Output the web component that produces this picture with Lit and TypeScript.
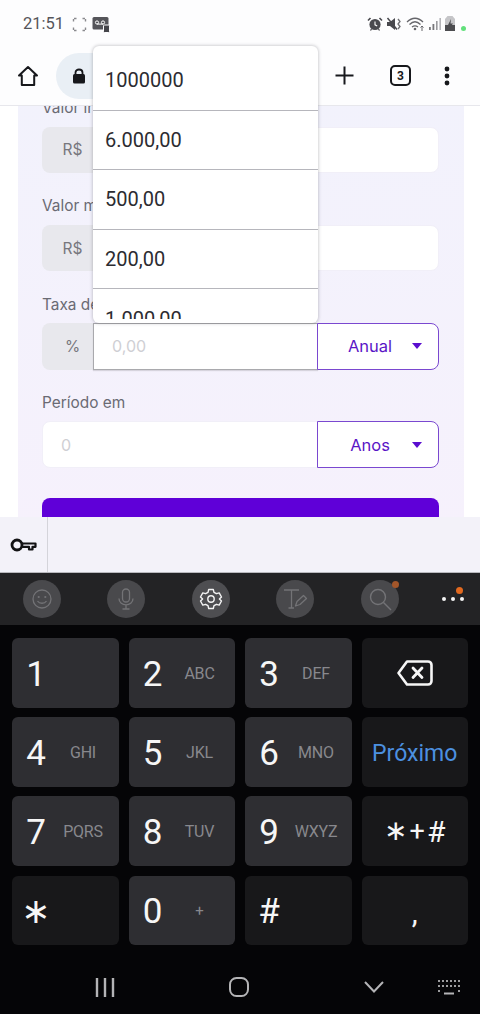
import { LitElement, html, css, svg } from "lit";
import { customElement } from "lit/decorators.js";

const digitKeys: [string, string][][] = [
  [["1", ""], ["2", "ABC"], ["3", "DEF"]],
  [["4", "GHI"], ["5", "JKL"], ["6", "MNO"]],
  [["7", "PQRS"], ["8", "TUV"], ["9", "WXYZ"]],
];

const suggestions = ["1000000", "6.000,00", "500,00", "200,00", "1.000,00"];

@customElement("app-root")
export class AppRoot extends LitElement {
  static styles = css`
    :host { display: block; position: relative; width: 480px; height: 1014px; overflow: hidden; background: #fff; font-family: Inter, "Liberation Sans", sans-serif; }
    * { box-sizing: border-box; }
    .screen { display: flex; flex-direction: column; height: 1014px; }

    .chrome { position: relative; z-index: 2; background: #fdfdfe; border-bottom: 1px solid #e7e7ec; height: 106px; flex: none; }
    .status { height: 46px; display: flex; align-items: center; padding: 2px 14px 0 23px; font-family: Roboto, sans-serif; color: #55555a; }
    .time { font-size: 16.5px; line-height: 20px; margin-right: 8px; }
    .status-left { display: flex; align-items: center; gap: 5px; }
    .status-right { margin-left: auto; display: flex; align-items: center; gap: 3px; }
    .online { width: 5px; height: 5px; border-radius: 50%; background: #62e07c; margin: 8px 0 0 2px; }
    .toolbar { height: 59px; display: flex; align-items: center; padding: 0 30px 0 17px; }
    .pill { margin-left: 17px; width: 262px; height: 46px; border-radius: 23px; background: #e9eff5; display: flex; align-items: center; padding-left: 16px; }
    .tb-right { margin-left: auto; display: flex; align-items: center; gap: 35px; }
    .tabs { width: 21px; height: 21px; border: 2px solid #17181c; border-radius: 5px; display: flex; align-items: center; justify-content: center; font: 700 12px Roboto, sans-serif; color: #17181c; margin-right: -2px; }

    .page { height: 411px; flex: none; overflow: hidden; background: #fff; padding: 0 16px 0 18px; }
    .card { margin-top: -10.3px; height: 440px; background: linear-gradient(180deg, #f2f2fc, #f6f1fc); padding: 0 25px 0 24px; display: flex; flex-direction: column; gap: 20.7px; }
    .field { display: flex; flex-direction: column; gap: 7px; }
    .label { font-size: 15.4px; line-height: 24px; color: #6a6a73; white-space: nowrap; position: relative; top: 0.5px; }
    .group { display: flex; height: 46.5px; }
    .prefix { width: 51px; flex: none; background: #e8e8ed; border-radius: 8px 0 0 8px; display: flex; align-items: center; justify-content: center; color: #77777d; font-size: 15.5px; padding-left: 10px; }
    .input { flex: 1; background: #fff; border-radius: 0 8px 8px 0; border: 1px solid #f1eff8; display: flex; align-items: center; padding-left: 18px; color: #cfcfd4; font-size: 16px; }
    .input.alone { border-radius: 8px 0 0 8px; }
    .input.focus { border-radius: 0; border: 1px solid #a9a9ad; border-right: none; box-shadow: 0 1px 1px rgba(0,0,0,.12); }
    .select { width: 122px; flex: none; background: #fff; border: 1px solid #7a48d0; border-radius: 0 8px 8px 0; display: flex; align-items: center; padding: 0 16px 0 10px; color: #5a15c6; font-size: 16.5px; }
    .select span { flex: 1; text-align: center; }
    .caret { width: 0; height: 0; border-left: 5.5px solid transparent; border-right: 5.5px solid transparent; border-top: 6px solid #5a0dcf; }
    .submit { height: 60px; margin-top: 9.7px; border: none; border-radius: 8px; background: #5f00d8; flex: none; }
    .input-narrow { margin-right: -1px; }

    .suggest { position: absolute; z-index: 3; left: 93px; top: 46px; width: 225px; height: 277px; padding: 5px 0 4px; background: #fff; border-radius: 6px; box-shadow: 0 0 3px 1px rgba(60,60,70,.22); }
    .suggest-in { height: 100%; overflow: hidden; }
    .opt { height: 59.6px; display: flex; align-items: center; padding-left: 12px; border-bottom: 1px solid #b6b6bc; font: 20px Roboto, sans-serif; color: #2c2c31; }
    .opt:last-child { border-bottom: none; }

    .accessory { height: 56px; flex: none; background: #f3f2f9; display: flex; position: relative; z-index: 1; border-bottom: 1px solid #b9b9be; }
    .acc-key { width: 48px; border-right: 1px solid #d4d4da; display: flex; align-items: center; justify-content: center; }

    .kb-tools { height: 52px; flex: none; background: #232325; display: flex; align-items: center; padding-left: 23px; position: relative; }
    .tool { width: 38px; height: 38px; border-radius: 50%; background: #49494c; margin-right: 46.4px; display: flex; align-items: center; justify-content: center; position: relative; }
    .tool:nth-child(3) { background: #4e4e51; }
    .badge { position: absolute; border-radius: 50%; background: #e2691f; }
    .badge.dim { width: 7px; height: 7px; right: 0; top: 1px; background: #a2562a; }
    .more { position: absolute; left: 442px; top: 24px; display: flex; gap: 5px; }
    .more i { width: 4px; height: 4px; border-radius: 50%; background: #f4f4f4; display: block; }
    .badge.main { width: 7px; height: 7px; left: 456px; top: 14px; }

    .keyboard { flex: 1; background: #050507; display: flex; flex-direction: column; }
    .keys { display: grid; grid-template-columns: repeat(4, 106.5px); grid-auto-rows: 69.6px; gap: 9.6px 10px; padding: 13px 12px 0; }
    .key { border-radius: 6px; background: #2e2e32; color: #f6f6f6; display: grid; grid-template-columns: 48px 46px; align-items: center; font-family: Roboto, sans-serif; }
    .key.dark { background: #18181a; }
    .key.center { display: flex; justify-content: center; }
    .d { font-size: 35px; line-height: 1; text-align: center; padding-top: 3px; }
    .s { font-size: 16px; color: #88888d; text-align: center; white-space: nowrap; letter-spacing: -.2px; padding-top: 1px; }
    .s.plus { font-size: 15px; }
    .next { font-size: 23px; color: #4c90e0; padding-top: 3px; }
    .sym { font-size: 35px; line-height: 1; text-align: center; padding-top: 3px; }
    .star { font-family: "DejaVu Sans", sans-serif; font-size: 35px; line-height: 1; text-align: center; padding-top: 3px; }
    .combo { display: flex; align-items: center; font-size: 27px; gap: 2px; }
    .combo b { font-family: "DejaVu Sans", sans-serif; font-weight: 400; font-size: 28px; line-height: 1; }
    .combo .hash { font-size: 30px; }
    .comma { font-size: 30px; line-height: 1; padding-top: 5px; }

    .nav { flex: 1; display: flex; align-items: center; position: relative; padding: 14px 0 0 94px; }
    .nav svg { display: block; }
    .sp1 { width: 112px; }
    .sp2 { width: 113px; }
    .sp3 { width: 52px; }
  `;

  private icon(w: number, h: number, body: unknown) {
    return html`<svg width=${w} height=${h} viewBox="0 0 ${w} ${h}" fill="none">${body}</svg>`;
  }

  private statusLeft() {
    return html`<div class="status-left">
      ${this.icon(15, 15, svg`<path d="M1.5 4.5V1.5H4.5M10.5 1.5H13.5V4.5M13.5 10.5V13.5H10.5M4.5 13.5H1.5V10.5" stroke="#8a8a8e" stroke-width="1.4" stroke-dasharray="2.5 1"/>`)}
      ${this.icon(18, 17, svg`<rect x="0.5" y="1" width="16" height="12.5" rx="1.5" fill="#55555a"/><circle cx="5" cy="6.5" r="1.6" stroke="#fff" stroke-width="1"/><circle cx="11" cy="6.5" r="1.6" stroke="#fff" stroke-width="1"/><path d="M5 8.1H11" stroke="#fff"/><rect x="11.5" y="9" width="6" height="7.5" rx="1" fill="#45454a" stroke="#fdfdfe"/>`)}
    </div>`;
  }

  private statusRight() {
    return html`<div class="status-right">
      ${this.icon(16, 16, svg`<circle cx="8" cy="8.5" r="5.6" fill="#49494e"/><path d="M8 5.5V8.8L10.2 10" stroke="#fff" stroke-width="1.1"/><path d="M1 4.5L3.5 2M15 4.5L12.5 2" stroke="#49494e" stroke-width="1.6"/><path d="M3.5 14.5L4.5 13M12.5 14.5L11.5 13" stroke="#49494e" stroke-width="1.3"/>`)}
      ${this.icon(17, 16, svg`<path d="M1 6H4L9 2V14L4 10H1Z" fill="#49494e"/><path d="M1.5 2L11 13.500" stroke="#49494e" stroke-width="1.500"/><path d="M12 3L14 5.500L12 8L14 10.500L12 13" stroke="#6e6e72" stroke-width="1.300"/>`)}
      ${this.icon(20, 16, svg`<path d="M1 6C6 1 12 1 17 6M3.5 8.5C7 5 11 5 14.5 8.5M6 11C8 9.4 10 9.4 12 11" stroke="#66666b" stroke-width="1.3"/><circle cx="9" cy="13" r="1.3" fill="#66666b"/><path d="M16 15V10M14.5 11.5L16 10L17.5 11.5" stroke="#66666b" stroke-width="1"/>`)}
      ${this.icon(12, 16, svg`<rect x="0" y="11" width="1.800" height="3" fill="#77777b"/><rect x="3.500" y="8" width="1.800" height="6" fill="#77777b"/><rect x="7" y="5" width="1.600" height="9" fill="#9a9a9e"/><rect x="10.400" y="2" width="1.600" height="12" fill="#b5b5b9"/>`)}
      ${this.icon(12, 18, svg`<path d="M3.5 1H8.5L11 4V16H1V4Z" fill="#c5c5c8"/><rect x="1" y="10" width="10" height="6" fill="#4c4c50"/><path d="M7 4L4 10H6.5L5 14L9 8.5H6.5Z" fill="#4c4c50"/>`)}
      <span class="online"></span>
    </div>`;
  }

  private field(label: string, prefix: string, hint: string, unit?: string, focus = false) {
    return html`<div class="field">
      <div class="label">${label}</div>
      <div class="group">
        ${prefix ? html`<div class="prefix">${prefix}</div>` : ""}
        <div class="input ${unit ? "input-narrow" : ""} ${focus ? "focus" : ""} ${prefix ? "" : "alone"}">${hint}</div>
        ${unit ? html`<div class="select"><span>${unit}</span><i class="caret"></i></div>` : ""}
      </div>
    </div>`;
  }

  private tools() {
    const c = "#737376";
    return html`
      <div class="tool">${this.icon(24, 24, svg`<circle cx="12" cy="12" r="9" stroke=${c} stroke-width="1.3"/><circle cx="8.7" cy="10" r="1.1" fill=${c}/><circle cx="15.3" cy="10" r="1.1" fill=${c}/><path d="M7.5 14C9.5 17 14.5 17 16.5 14" stroke=${c} stroke-width="1.3"/>`)}</div>
      <div class="tool">${this.icon(24, 24, svg`<rect x="8.5" y="2" width="7" height="13" rx="3.5" stroke=${c} stroke-width="1.3"/><path d="M5 11.5C5 20 19 20 19 11.5M12 18V21.5M8.5 22H15.5" stroke=${c} stroke-width="1.3"/>`)}</div>
      <div class="tool">${this.icon(24, 24, svg`<path d="M9.7 2.5H14.3L15 5.3L17.4 6.7L20.2 5.9L22.5 10L20.4 12L22.5 14L20.2 18.100L17.4 17.300L15 18.700L14.300 21.500H9.700L9 18.700L6.600 17.300L3.800 18.100L1.500 14L3.600 12L1.500 10L3.800 5.900L6.600 6.700L9 5.300Z" stroke="#f4f4f4" stroke-width="1.4" stroke-linejoin="round"/><circle cx="12" cy="12" r="3.200" stroke="#f4f4f4" stroke-width="1.400"/>`)}</div>
      <div class="tool">${this.icon(26, 26, svg`<path d="M2 4H17M9.500 4V22M6.500 22H12" stroke=${c} stroke-width="1.300"/><path d="M13.500 20L15 15.500L21.500 9.500L24.500 12.500L18 18.500Z" stroke=${c} stroke-width="1.300" stroke-linejoin="round"/>`)}</div>
      <div class="tool">${this.icon(26, 26, svg`<circle cx="11" cy="11" r="7.500" stroke=${c} stroke-width="1.400"/><path d="M16.500 16.500L24 24" stroke=${c} stroke-width="1.400"/>`)}<span class="badge dim"></span></div>
      <div class="more"><i></i><i></i><i></i></div>
      <span class="badge main"></span>
    `;
  }

  private keys() {
    const side: unknown[] = [
      html`<div class="key dark center">${this.icon(38, 28, svg`<path d="M11 2.500H32C34 2.500 35.500 4 35.500 6V22C35.500 24 34 25.500 32 25.500H11L2.500 14Z" stroke="#f6f6f6" stroke-width="2.600" stroke-linejoin="round"/><path d="M17 9L26 18.500M26 9L17 18.500" stroke="#f6f6f6" stroke-width="2.800" stroke-linecap="round"/>`)}</div>`,
      html`<div class="key dark center"><span class="next">Próximo</span></div>`,
      html`<div class="key dark center"><span class="combo"><b>∗</b><span>+</span><span class="hash">#</span></span></div>`,
    ];
    return digitKeys.map((row, i) => html`
      ${row.map(([d, s]) => html`<div class="key"><span class="d">${d}</span><span class="s">${s}</span></div>`)}
      ${side[i]}
    `);
  }

  render() {
    return html`<div class="screen">
      <div class="chrome">
        <div class="status"><span class="time">21:51</span>${this.statusLeft()}${this.statusRight()}</div>
        <div class="toolbar">
          ${this.icon(22, 22, svg`<path d="M11 2L2 10.500H4.800V20H17.200V10.500H20Z" stroke="#17181c" stroke-width="2" stroke-linejoin="round"/>`)}
          <div class="pill">${this.icon(14, 16, svg`<path d="M3.500 7V4.500C3.500 0.500 10.500 0.500 10.500 4.500V7" stroke="#17181c" stroke-width="1.800"/><rect x="1" y="6" width="12" height="9.500" rx="1.500" fill="#17181c"/>`)}</div>
          <div class="tb-right">
            ${this.icon(21, 21, svg`<path d="M10.500 1.500V19.500M1.500 10.500H19.500" stroke="#17181c" stroke-width="2"/>`)}
            <div class="tabs">3</div>
            ${this.icon(6, 20, svg`<circle cx="3" cy="3" r="2.400" fill="#17181c"/><circle cx="3" cy="10" r="2.400" fill="#17181c"/><circle cx="3" cy="17" r="2.400" fill="#17181c"/>`)}
          </div>
        </div>
      </div>

      <div class="page"><div class="card">
        ${this.field("Valor inicial", "R$", "")}
        ${this.field("Valor mensal", "R$", "")}
        ${this.field("Taxa de juros", "%", "0,00", "Anual", true)}
        ${this.field("Período em", "", "0", "Anos")}
        <div class="submit"></div>
      </div></div>

      <div class="accessory"><div class="acc-key">
        ${this.icon(27, 16, svg`<circle cx="7" cy="8" r="5" stroke="#121214" stroke-width="2.800"/><path d="M12 6.500H25.500V9.800H22.500V12.500H19V9.800H12" stroke="#121214" stroke-width="2.200" stroke-linejoin="round"/>`)}
      </div></div>

      <div class="kb-tools">${this.tools()}</div>

      <div class="keyboard">
        <div class="keys">
          ${this.keys()}
          <div class="key dark"><span class="star">∗</span></div>
          <div class="key"><span class="d">0</span><span class="s plus">+</span></div>
          <div class="key dark"><span class="sym">#</span></div>
          <div class="key dark center"><span class="comma">,</span></div>
        </div>
        <div class="nav">
          ${this.icon(22, 22, svg`<path d="M3 2V21M11 2V21M19 2V21" stroke="#b4b4b6" stroke-width="2.400"/>`)}
          <span class="sp1"></span>
          ${this.icon(22, 22, svg`<rect x="2" y="2" width="18" height="18" rx="6.500" stroke="#b4b4b6" stroke-width="2"/>`)}
          <span class="sp2"></span>
          ${this.icon(22, 14, svg`<path d="M2 2L11 11.500L20 2" stroke="#b4b4b6" stroke-width="2"/>`)}
          <span class="sp3"></span>
          ${this.icon(24, 16, svg`<path d="M1 2H23M1 7H23M1 12H3M21 12H23" stroke="#9c9c9e" stroke-width="2" stroke-dasharray="2 2"/><path d="M7 14.500H17" stroke="#b4b4b6" stroke-width="2"/>`)}
        </div>
      </div>
    </div>

    <div class="suggest"><div class="suggest-in">
      ${suggestions.map((s) => html`<div class="opt">${s}</div>`)}
    </div></div>`;
  }
}
